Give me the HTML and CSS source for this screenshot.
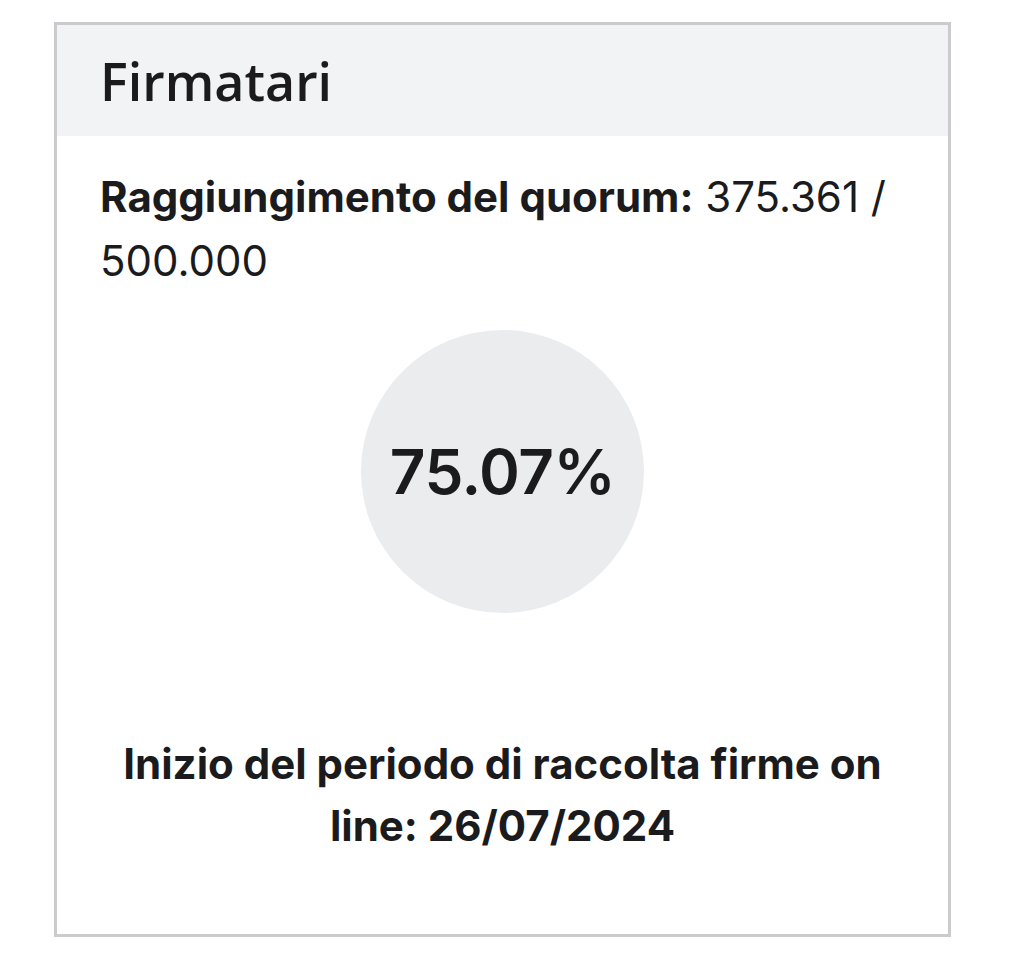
FILE: index.html
```html
<!DOCTYPE html>
<html lang="it">
<head>
<meta charset="utf-8">
<title>Firmatari</title>
<link rel="stylesheet" href="styles.css">
</head>
<body>
<section class="card">
  <header class="card-header">
    <h2 class="card-title">Firmatari</h2>
  </header>
  <div class="card-body">
    <p class="quorum"><strong class="quorum-label">Raggiungimento del quorum:</strong> <span class="quorum-value">375.361 / 500.000</span></p>
    <div class="progress-wrap">
      <div class="progress-circle"><span class="progress-value">75.07%</span></div>
    </div>
    <p class="start-date">Inizio del periodo di raccolta firme on line: 26/07/2024</p>
  </div>
</section>
</body>
</html>
```
FILE: styles.css
```css
html, body {
  margin: 0;
  padding: 0;
  background: #ffffff;
}
body {
  font-family: Inter, "Liberation Sans", sans-serif;
  color: #1b1b1d;
}
.card {
  box-sizing: border-box;
  margin: 22px 0 0 54px;
  width: 897px;
  height: 915px;
  border: 3px solid #cbcbcd;
  display: flex;
  flex-direction: column;
}
.card-header {
  height: 111px;
  background: #f2f3f5;
  display: flex;
  align-items: center;
  padding: 0 43px;
}
.card-title {
  margin: 0;
  font-family: "Open Sans", Lato, sans-serif;
  font-weight: 600;
  font-size: 52px;
  line-height: 1;
  color: #1b1b1d;
}
.card-body {
  padding: 29px 43px 0;
}
.quorum {
  margin: 0;
  font-size: 42px;
  line-height: 64px;
  font-weight: 400;
}
.quorum-label {
  font-weight: 700;
}
.progress-wrap {
  display: flex;
  justify-content: center;
  margin-top: 37px;
}
.progress-circle {
  width: 283px;
  height: 283px;
  border-radius: 50%;
  background: #ebecee;
  display: flex;
  align-items: center;
  justify-content: center;
}
.progress-value {
  font-size: 62px;
  font-weight: 600;
  letter-spacing: -0.5px;
}
.start-date {
  margin: 120px 0 0;
  text-align: center;
  font-size: 42px;
  line-height: 62px;
  font-weight: 700;
}
```
